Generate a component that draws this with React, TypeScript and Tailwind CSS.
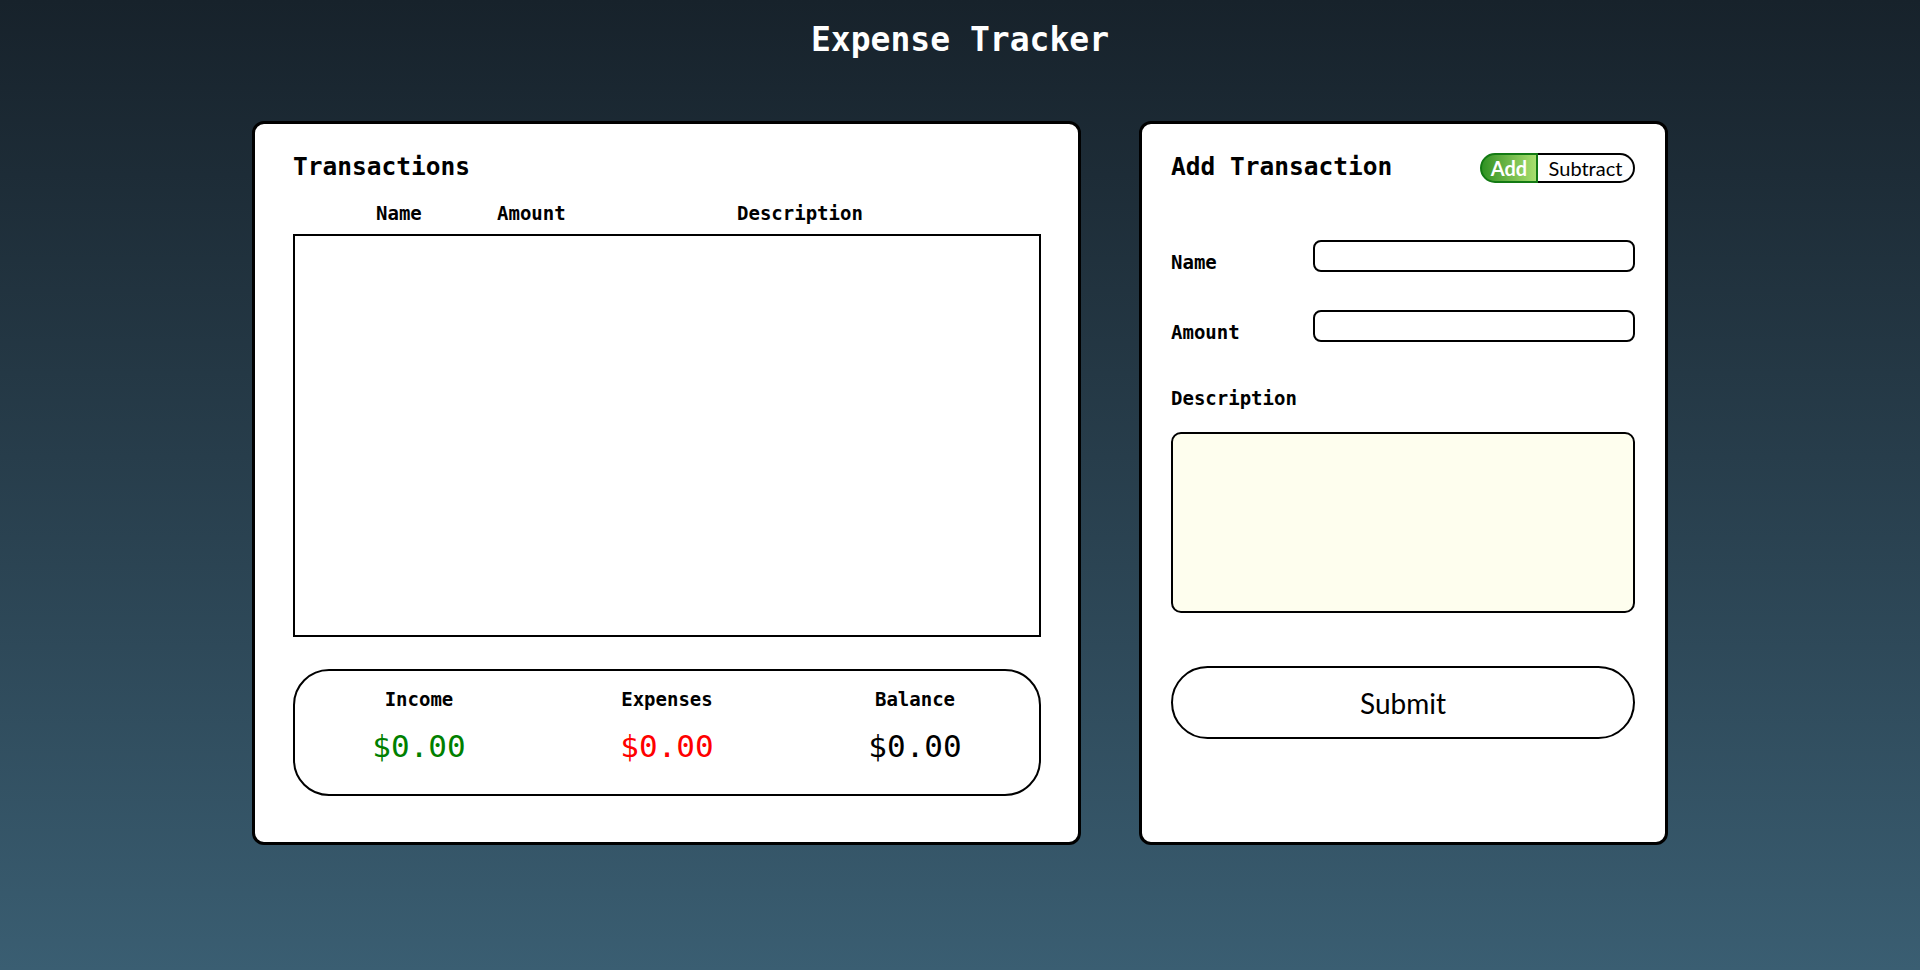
import * as React from 'react';

const mono = { fontFamily: '"DejaVu Sans Mono", "Liberation Mono", monospace' };

const SummaryItem = ({ label, value, color }: { label: string; value: string; color: string }) => (
  <div className="flex flex-col items-center">
    <span className="text-[19px] leading-6 font-bold text-black">{label}</span>
    <span className={`mt-[17px] text-[31px] leading-9 ${color}`}>{value}</span>
  </div>
);

const App = () => {
  const [mode, setMode] = React.useState<'add' | 'subtract'>('add');

  return (
    <div
      className="min-h-screen w-full bg-linear-to-b from-[#17222b] to-[#3a5e72] flex flex-col items-center pt-5"
      style={mono}
    >
      <h1 className="text-[33px] leading-10 font-bold text-white">Expense Tracker</h1>

      <div className="mt-[61px] flex gap-[58px]">
        {/* transactions panel */}
        <div className="w-[829px] h-[724px] bg-white border-[3px] border-black rounded-xl pt-[27px] pl-[38px] pr-[37px]">
          <h2 className="text-[24.5px] leading-8 font-bold text-black">Transactions</h2>
          <div className="mt-[18px] grid grid-cols-[83px_121px_240px_1fr] text-[19px] leading-6 font-bold text-black">
            <span />
            <span>Name</span>
            <span>Amount</span>
            <span>Description</span>
          </div>
          <div className="mt-[9px] h-[403px] border-2 border-black" />
          <div className="mt-8 h-[127px] border-2 border-black rounded-[36px] grid grid-cols-3 pt-[16px]">
            <SummaryItem label="Income" value="$0.00" color="text-[#008000]" />
            <SummaryItem label="Expenses" value="$0.00" color="text-[#ff0000]" />
            <SummaryItem label="Balance" value="$0.00" color="text-black" />
          </div>
        </div>

        {/* add transaction panel */}
        <div className="w-[529px] h-[724px] bg-white border-[3px] border-black rounded-xl pt-[27px] pl-[29px] pr-[30px]">
          <div className="flex items-center justify-between">
            <h2 className="text-[24.5px] leading-8 font-bold text-black">Add Transaction</h2>
            <div className="flex h-[30px] mt-[2px]" style={{ fontFamily: 'Lato, "Noto Sans", sans-serif' }}>
              <button
                onClick={() => setMode('add')}
                className={`w-[58px] h-full rounded-l-full border-2 text-[20px] leading-none font-bold ${
                  mode === 'add'
                    ? 'border-[#137a13] bg-linear-to-r from-[#2e9222] to-[#a8df6e] text-white'
                    : 'border-black bg-white text-black'
                }`}
              >
                Add
              </button>
              <button
                onClick={() => setMode('subtract')}
                className={`w-[97px] h-full rounded-r-full border-2 border-l-0 text-[20px] leading-none ${
                  mode === 'subtract'
                    ? 'border-[#8a1010] bg-linear-to-r from-[#c02a2a] to-[#f08080] text-white font-bold'
                    : 'border-black bg-white text-black'
                }`}
              >
                Subtract
              </button>
            </div>
          </div>

          <div className="mt-[57px] flex items-end">
            <label className="w-[142px] text-[19px] leading-6 font-bold text-black translate-y-[2px]">Name</label>
            <input className="w-[322px] h-8 border-2 border-black rounded-lg px-2 outline-none" />
          </div>
          <div className="mt-[38px] flex items-end">
            <label className="w-[142px] text-[19px] leading-6 font-bold text-black translate-y-[2px]">Amount</label>
            <input className="w-[322px] h-8 border-2 border-black rounded-lg px-2 outline-none" />
          </div>
          <label className="mt-[44px] block text-[19px] leading-6 font-bold text-black">Description</label>
          <textarea className="mt-[22px] block w-[464px] h-[181px] border-2 border-black rounded-[10px] bg-[#fefeee] resize-none p-2 outline-none" />
          <button
            className="mt-[53px] w-[464px] h-[73px] border-2 border-black rounded-full bg-white text-[28px] text-black"
            style={{ fontFamily: 'Lato, "Noto Sans", sans-serif' }}
          >
            Submit
          </button>
        </div>
      </div>
    </div>
  );
};

export default App;
